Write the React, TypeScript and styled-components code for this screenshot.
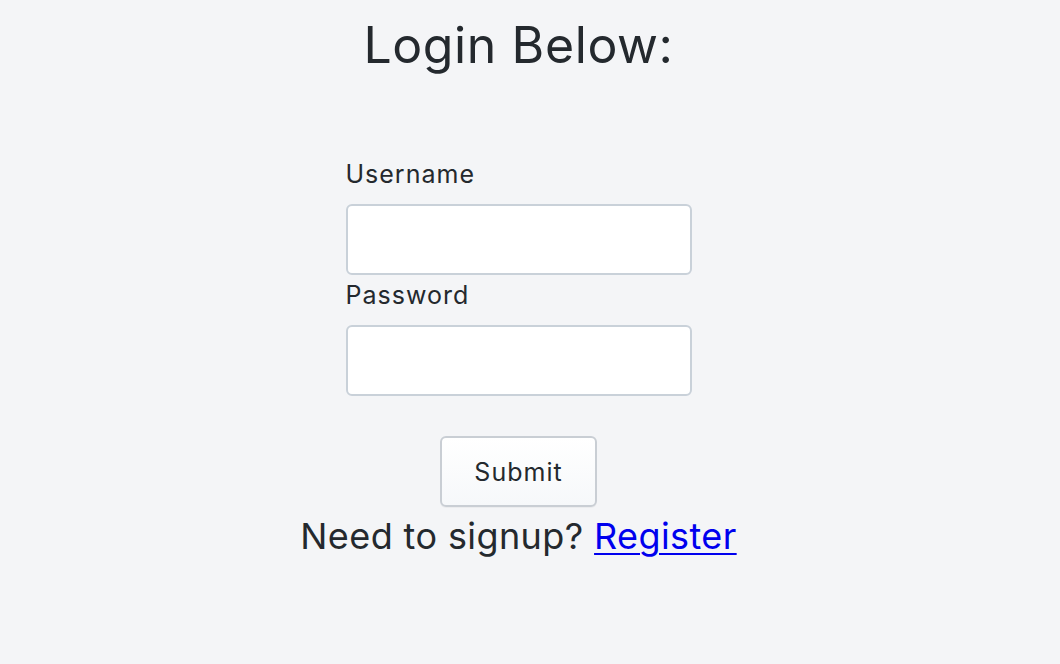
import React from "react";
import { useState } from "react";
import { styled, createGlobalStyle } from "styled-components";

const GlobalStyle = createGlobalStyle`
  html, body {
    margin: 0;
    padding: 0;
    background: #f4f5f7;
    color: #24292e;
    font-family: Inter, "Noto Sans", "Liberation Sans", sans-serif;
  }
`;

const Page = styled.div`
  min-height: 664px;
  padding-right: 23px;
  display: flex;
  flex-direction: column;
  align-items: center;
`;

const Title = styled.h1`
  margin: 12px 0 0;
  font-size: 50px;
  font-weight: 400;
  line-height: 66px;
  letter-spacing: 0.6px;
`;

const Form = styled.form`
  width: 346px;
  margin-top: 78px;
  display: flex;
  flex-direction: column;
`;

const Field = styled.div`
  display: flex;
  flex-direction: column;
`;

const Label = styled.label`
  font-size: 25px;
  line-height: 36px;
  letter-spacing: 1px;
  margin-bottom: 12px;
`;

const Input = styled.input`
  box-sizing: border-box;
  width: 100%;
  height: 71px;
  padding: 0 14px;
  font-size: 24px;
  font-family: inherit;
  background: #ffffff;
  border: 2px solid #c9d1d9;
  border-radius: 6px;
  outline: none;
  margin-bottom: 2px;
`;

const Actions = styled.div`
  display: flex;
  justify-content: center;
  margin-top: 38px;
`;

const Button = styled.button`
  width: 157px;
  height: 71px;
  font-family: inherit;
  font-size: 25px;
  letter-spacing: 1px;
  color: #24292e;
  background: linear-gradient(#ffffff, #f6f8fa);
  border: 2px solid #c9ced4;
  border-radius: 6px;
  box-shadow: 0 1px 0 rgba(27, 31, 35, 0.04);
  cursor: pointer;
`;

const Footer = styled.p`
  margin: 3px 0 0;
  font-size: 36px;
  line-height: 52px;
  letter-spacing: 0.4px;
  text-align: center;
`;

const Link = styled.a`
  color: #0000ee;
  text-decoration: underline;
  text-decoration-thickness: 2px;
  text-underline-offset: 4px;
`;

const App: React.FC = () => {
  const [username, setUsername] = useState<string>("");
  const [password, setPassword] = useState<string>("");

  return (
    <>
      <GlobalStyle />
      <Page>
        <Title>Login Below:</Title>
        <Form onSubmit={(e) => e.preventDefault()}>
          <Field>
            <Label htmlFor="username">Username</Label>
            <Input
              id="username"
              value={username}
              onChange={(e) => setUsername(e.target.value)}
            />
          </Field>
          <Field>
            <Label htmlFor="password">Password</Label>
            <Input
              id="password"
              type="password"
              value={password}
              onChange={(e) => setPassword(e.target.value)}
            />
          </Field>
          <Actions>
            <Button type="submit">Submit</Button>
          </Actions>
        </Form>
        <Footer>
          Need to signup? <Link href="#">Register</Link>
        </Footer>
      </Page>
    </>
  );
};

export default App;
